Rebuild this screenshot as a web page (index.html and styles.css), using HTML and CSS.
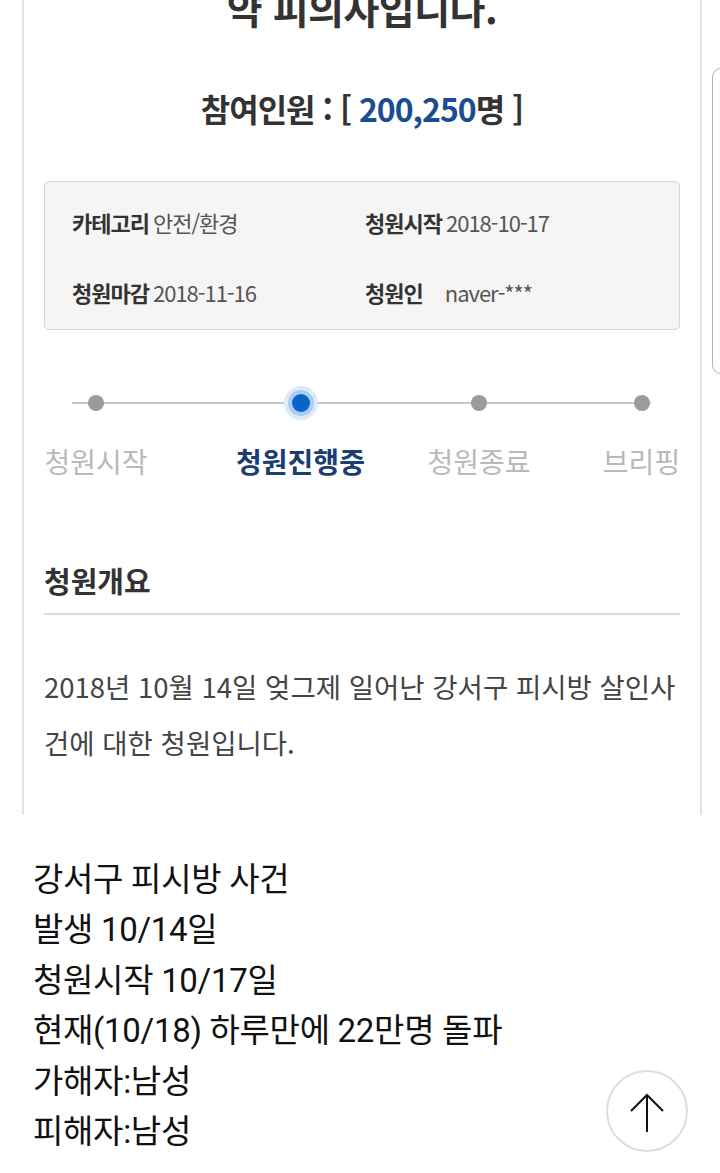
FILE: index.html
```html
<!DOCTYPE html>
<html lang="ko">
<head>
<meta charset="utf-8">
<title>청원</title>
<link rel="stylesheet" href="styles.css">
</head>
<body>
<div class="card">
  <h1 class="title">약 피의자입니다.</h1>
  <p class="count">참여인원 : [ <span class="num">200,250</span>명 ]</p>
  <div class="info">
    <div class="item"><b class="lbl">카테고리</b><span class="val">안전/환경</span></div>
    <div class="item"><b class="lbl">청원시작</b><span class="val">2018-10-17</span></div>
    <div class="item"><b class="lbl">청원마감</b><span class="val">2018-11-16</span></div>
    <div class="item"><b class="lbl wide">청원인</b><span class="val">naver-***</span></div>
  </div>
  <div class="steps">
    <div class="step s1"><span class="dotrow"><span class="dot"></span></span><span class="label">청원시작</span></div>
    <div class="step s2"><span class="dotrow"><span class="dot active"></span></span><span class="label on">청원진행중</span></div>
    <div class="step s3"><span class="dotrow"><span class="dot"></span></span><span class="label">청원종료</span></div>
    <div class="step s4"><span class="dotrow"><span class="dot"></span></span><span class="label">브리핑</span></div>
  </div>
  <h2 class="sec">청원개요</h2>
  <p class="body">2018년 10월 14일 엊그제 일어난 강서구 피시방 살인사<br>건에 대한 청원입니다.</p>
</div>
<div class="post">
  <p>강서구 피시방 사건</p>
  <p>발생 10/14일</p>
  <p>청원시작 10/17일</p>
  <p>현재(10/18) 하루만에 22만명 돌파</p>
  <p>가해자:남성</p>
  <p>피해자:남성</p>
</div>
<button class="totop" type="button" aria-label="맨 위로">
  <svg width="40" height="40" viewBox="0 0 40 40" fill="none" stroke="#111" stroke-width="2" stroke-linecap="butt">
    <path d="M20 3 V40"/>
    <path d="M4 19 L20 3 L36 19"/>
  </svg>
</button>
<div class="handle"></div>
</body>
</html>
```
FILE: styles.css
```css
html, body {
  margin: 0;
  padding: 0;
  background: #fff;
}
body {
  width: 720px;
  height: 1173px;
  overflow: hidden;
  position: relative;
  font-family: "Noto Sans CJK KR", "Noto Sans", sans-serif;
}
.card {
  margin-left: 22px;
  width: 636px;
  height: 815px;
  padding: 0 20px;
  border-left: 2px solid #e3e3e3;
  border-right: 2px solid #e3e3e3;
  overflow: hidden;
  color: #333;
}
.title {
  margin: -16px 0 0;
  font-size: 39px;
  line-height: 46px;
  font-weight: 700;
  text-align: center;
  letter-spacing: -0.5px;
  color: #333;
}
.count {
  margin: 58px 0 0;
  font-size: 32px;
  line-height: 40px;
  font-weight: 700;
  text-align: center;
  letter-spacing: -1px;
  color: #333;
}
.num {
  color: #1a4d92;
}
.info {
  margin-top: 53px;
  display: grid;
  grid-template-columns: 293px 1fr;
  row-gap: 32px;
  padding: 21px 27px 18px;
  background: #f5f5f5;
  border: 1px solid #d6d6d6;
  border-radius: 5px;
}
.item {
  height: 38px;
  line-height: 38px;
  font-size: 22px;
  letter-spacing: -1px;
  white-space: nowrap;
}
.lbl {
  margin-right: 4px;
  font-weight: 700;
  color: #333;
}
.lbl.wide {
  margin-right: 22px;
}
.val {
  color: #555;
}
.steps {
  position: relative;
  margin-top: 56px;
  display: grid;
  grid-template-columns: 104px 87px 131px 61px 104px 72px 77px;
}
.steps::before {
  content: "";
  position: absolute;
  left: 28px;
  top: 16px;
  width: 579px;
  height: 2px;
  background: #c9c9c9;
}
.step {
  display: flex;
  flex-direction: column;
  align-items: center;
}
.s1 { grid-column: 1; }
.s2 { grid-column: 3; }
.s3 { grid-column: 5; }
.s4 { grid-column: 7; }
.dotrow {
  position: relative;
  height: 34px;
  display: flex;
  align-items: center;
  justify-content: center;
}
.dot {
  width: 16px;
  height: 16px;
  border-radius: 50%;
  background: #9b9b9b;
}
.dot.active {
  width: 18px;
  height: 18px;
  background: #0b63c6;
  box-shadow: 0 0 0 4px #a9cdf3, 0 0 0 8px #dcebfa;
}
.label {
  margin-top: 23px;
  font-size: 28px;
  line-height: 36px;
  color: #b9b9b9;
  white-space: nowrap;
}
.label.on {
  font-weight: 700;
  color: #1c3d72;
}
.sec {
  margin: 83px 0 0;
  padding-bottom: 15px;
  border-bottom: 2px solid #dcdcdc;
  font-size: 29px;
  line-height: 36px;
  font-weight: 700;
  color: #333;
}
.body {
  margin: 43px 0 0;
  font-size: 27.5px;
  line-height: 56px;
  color: #444;
  white-space: nowrap;
}
.post {
  margin-top: 40px;
  padding-left: 33px;
  font-family: Roboto, "Noto Sans CJK KR", sans-serif;
  font-size: 33px;
  line-height: 50.4px;
  letter-spacing: -0.3px;
  color: #111;
}
.post p {
  margin: 0;
  white-space: nowrap;
}
.totop {
  position: absolute;
  left: 606px;
  top: 1070px;
  width: 82px;
  height: 82px;
  padding: 0;
  border: 2px solid #dedede;
  border-radius: 50%;
  background: #fff;
  display: flex;
  align-items: center;
  justify-content: center;
}
.totop svg {
  display: block;
  margin-top: 2px;
}
.handle {
  position: absolute;
  left: 712px;
  top: 68px;
  width: 20px;
  height: 304px;
  border: 1.5px solid #b3b3b3;
  border-radius: 9px;
  background: #fff;
}
```
